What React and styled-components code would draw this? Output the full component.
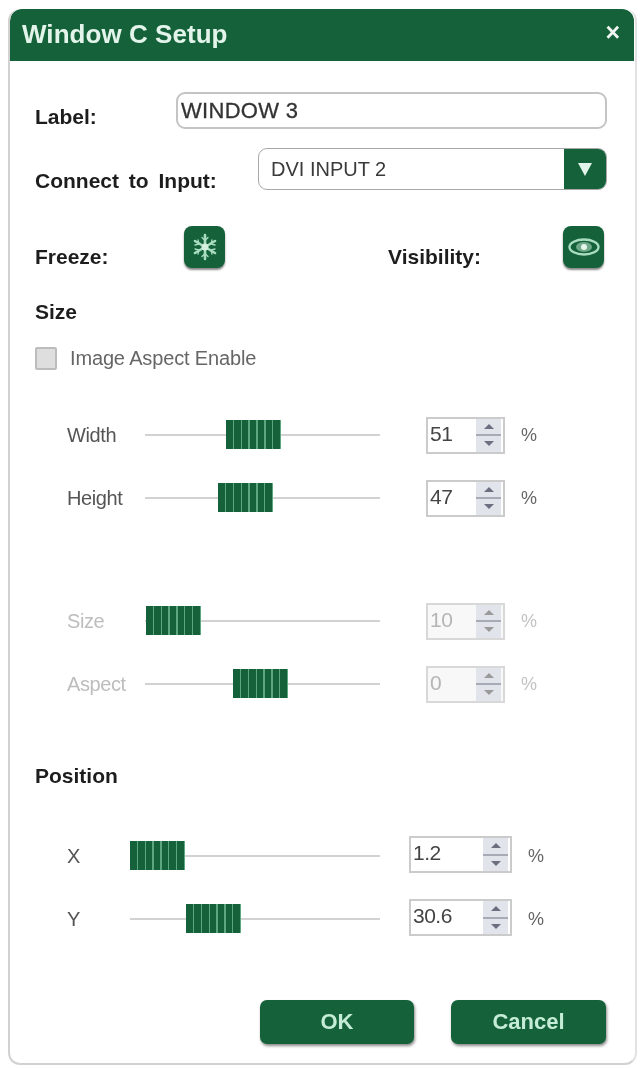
import React from 'react'
import styled, { createGlobalStyle } from 'styled-components'

const green = '#14613a'

const Global = createGlobalStyle`
html, body { margin: 0; padding: 0; background: #fff; }
body { font-family: "Liberation Sans", Arial, sans-serif; }
`

const Snowflake = () => (
  <svg width="30" height="32" viewBox="0 0 30 32" fill="none" stroke="#a9dcc0" strokeWidth="2.6" strokeLinecap="round">
    <path d="M15 4v24M5 10l20 12M5 22l20-12" />
    <path d="M12 6.500l3 3 3-3M12 25.500l3-3 3 3M5 14l4-1-1-4M25 18l-4 1 1 4M5 18l4 1-1 4M25 14l-4-1 1-4" strokeWidth="1.300" />
    <circle cx="15" cy="16" r="3.500" fill="#d6f0e0" stroke="none" />
  </svg>
)

const Eye = () => (
  <svg width="32" height="18" viewBox="0 0 32 18" fill="none">
    <ellipse cx="16" cy="9" rx="14.500" ry="7.500" stroke="#a9dcc0" strokeWidth="2.400" />
    <ellipse cx="16" cy="9" rx="8" ry="5" fill="#6fa98a" />
    <circle cx="16" cy="9" r="3" fill="#e4f5ea" />
  </svg>
)

const Slider = ({ name, value, thumb, disabled, wide }) => (
  <SliderRow $wide={wide}>
    <RowLabel $disabled={disabled} $wide={wide}>{name}</RowLabel>
    <Track>
      <Thumb $left={thumb} />
    </Track>
    <Spinner $disabled={disabled} $wide={wide}>
      <SpinValue $disabled={disabled}>{value}</SpinValue>
      <SpinButtons>
        <SpinButton><Up $disabled={disabled} /></SpinButton>
        <SpinButton><Down $disabled={disabled} /></SpinButton>
      </SpinButtons>
    </Spinner>
    <Percent $disabled={disabled}>%</Percent>
  </SliderRow>
)

const App = () => {
  return (
    <>
      <Global />
      <Window>
        <Header>
          <Title>Window C Setup</Title>
          <Close>×</Close>
        </Header>
        <Body>
          <LabelRow>
            <FieldName>Label:</FieldName>
            <TextBox>WINDOW 3</TextBox>
          </LabelRow>
          <SelectRow>
            <ConnectName>Connect to Input:</ConnectName>
            <Select>
              <SelectText>DVI INPUT 2</SelectText>
              <SelectArrow><Arrow /></SelectArrow>
            </Select>
          </SelectRow>
          <ToggleRow>
            <Toggle $first>
              <FieldName>Freeze:</FieldName>
              <IconButton><Snowflake /></IconButton>
            </Toggle>
            <Toggle>
              <FieldName>Visibility:</FieldName>
              <IconButton><Eye /></IconButton>
            </Toggle>
          </ToggleRow>
          <Heading $top={33}>Size</Heading>
          <CheckRow>
            <Check />
            <CheckText>Image Aspect Enable</CheckText>
          </CheckRow>
          <SliderGroup $top={46}>
            <Slider name="Width" value="51" thumb={81} />
            <Slider name="Height" value="47" thumb={73} />
          </SliderGroup>
          <SliderGroup $top={85}>
            <Slider name="Size" value="10" thumb={1} disabled />
            <Slider name="Aspect" value="0" thumb={88} disabled />
          </SliderGroup>
          <Heading $top={62}>Position</Heading>
          <SliderGroup $top={49}>
            <Slider name="X" value="1.2" thumb={0} wide />
            <Slider name="Y" value="30.6" thumb={56} wide />
          </SliderGroup>
          <Footer>
            <ActionButton $width={154}>OK</ActionButton>
            <ActionButton $width={155}>Cancel</ActionButton>
          </Footer>
        </Body>
      </Window>
    </>
  )
}

export default App

const Window = styled.div`
box-sizing:border-box;
width:629px;
height:1056px;
margin:9px 0 0 8px;
background:#fff;
border:2px solid #d2d2d2;
border-top:none;
border-right-color:#e2e2e2;
border-radius:12px;
overflow:hidden;
filter:blur(0.5px);
`
const Header = styled.div`
height:52px;
background:${green};
display:flex;
align-items:center;
justify-content:space-between;
padding:0 14px 0 12px;
margin-right:1px;
border-radius:12px 12px 0 0;
`
const Title = styled.div`
color:#e3f5ea;
font-size:26px;
font-weight:bold;
letter-spacing:0.05px;
margin-bottom:2px;
`
const Close = styled.div`
color:#f0f5f2;
font-size:25px;
font-weight:bold;
line-height:20px;
margin-bottom:7px;
`
const Body = styled.div`
padding:0 0 0 25px;
display:flex;
flex-direction:column;
`
const FieldName = styled.div`
color:#1d1d1d;
font-size:21px;
font-weight:bold;
white-space:nowrap;
`
const ConnectName = styled(FieldName)`
word-spacing:4px;
margin-bottom:-3px;
`
const LabelRow = styled.div`
margin-top:31px;
display:flex;
align-items:flex-end;
justify-content:space-between;
height:37px;
padding-right:28px;
`
const TextBox = styled.div`
box-sizing:border-box;
width:431px;
height:37px;
border:2px solid #c4c4c4;
border-radius:9px;
padding-left:3px;
font-size:22px;
color:#333;
display:flex;
align-items:center;
letter-spacing:0.3px;
-webkit-text-stroke:0.3px #333;
`
const SelectRow = styled.div`
margin-top:19px;
display:flex;
align-items:flex-end;
justify-content:space-between;
height:42px;
padding-right:28px;
`
const Select = styled.div`
box-sizing:border-box;
width:349px;
height:42px;
border:1px solid #a8a8a8;
border-radius:9px;
display:flex;
align-items:center;
justify-content:space-between;
overflow:hidden;
`
const SelectText = styled.div`
font-size:20px;
color:#3a3a3a;
padding-left:12px;
`
const SelectArrow = styled.div`
width:42px;
height:42px;
background:${green};
display:flex;
align-items:center;
justify-content:center;
`
const Arrow = styled.div`
width:0;
height:0;
border-left:7px solid transparent;
border-right:7px solid transparent;
border-top:13px solid #e3f5ea;
`
const ToggleRow = styled.div`
margin-top:36px;
display:flex;
height:42px;
`
const Toggle = styled.div`
display:flex;
align-items:flex-start;
justify-content:space-between;
width:${p => p.$first ? 190 : 216}px;
margin-right:${p => p.$first ? 163 : 0}px;
${FieldName}{
  margin-top:19px;
}
`
const IconButton = styled.div`
width:41px;
height:42px;
background:${green};
border-radius:8px;
box-shadow:0 2px 2px #8a8a8a;
display:flex;
align-items:center;
justify-content:center;
`
const Heading = styled(FieldName)`
margin-top:${p => p.$top}px;
height:22px;
line-height:22px;
`
const CheckRow = styled.div`
margin-top:24px;
height:23px;
display:flex;
align-items:center;
gap:13px;
`
const Check = styled.div`
box-sizing:border-box;
width:22px;
height:23px;
border:2px solid #bcbcbc;
background:#dedede;
border-radius:2px;
`
const CheckText = styled.div`
font-size:20px;
color:#666;
letter-spacing:-0.15px;
`
const SliderGroup = styled.div`
margin-top:${p => p.$top}px;
display:flex;
flex-direction:column;
gap:25px;
`
const SliderRow = styled.div`
height:38px;
display:grid;
grid-template-columns:${p => p.$wide ? '95px 250px 29px 103px 1fr' : '110px 235px 46px 79px 1fr'};
grid-template-areas:"name track . box pct";
align-items:center;
`
const RowLabel = styled.div`
grid-area:name;
font-size:20px;
color:${p => p.$disabled ? '#bdbdbd' : '#555'};
padding-left:32px;
letter-spacing:-0.4px;
`
const Track = styled.div`
grid-area:track;
position:relative;
height:2px;
background:#d2d2d2;
`
const Thumb = styled.div`
position:absolute;
left:${p => p.$left}px;
top:-14px;
width:55px;
height:29px;
background:repeating-linear-gradient(90deg,${green} 0 6.7px,#5da67f 6.7px 7.9px);
`
const Spinner = styled.div`
grid-area:box;
box-sizing:border-box;
height:37px;
margin-bottom:${p => p.$wide ? 3 : 0}px;
border:2px solid ${p => p.$disabled ? '#d8d8d8' : '#cbcbcb'};
background:${p => p.$disabled ? '#f8f8f8' : '#fff'};
display:flex;
align-items:center;
justify-content:space-between;
`
const SpinValue = styled.div`
font-size:21px;
color:${p => p.$disabled ? '#b5b5b5' : '#444'};
padding:0 0 3px 2px;
letter-spacing:-0.5px;
`
const SpinButtons = styled.div`
width:25px;
height:33px;
margin-right:2px;
display:flex;
flex-direction:column;
gap:2px;
background:#a8aab6;
`
const SpinButton = styled.div`
flex:1;
background:#e2e4ec;
display:flex;
align-items:center;
justify-content:center;
`
const Up = styled.div`
width:0;
height:0;
border-left:5px solid transparent;
border-right:5px solid transparent;
border-bottom:5px solid ${p => p.$disabled ? '#9a9a9a' : '#6c6f80'};
`
const Down = styled.div`
width:0;
height:0;
border-left:5px solid transparent;
border-right:5px solid transparent;
border-top:5px solid ${p => p.$disabled ? '#9a9a9a' : '#6c6f80'};
`
const Percent = styled.div`
grid-area:pct;
font-size:18px;
color:${p => p.$disabled ? '#c2c2c2' : '#666'};
padding-left:16px;
`
const Footer = styled.div`
margin-top:63px;
display:flex;
gap:37px;
justify-content:flex-end;
padding-right:29px;
`
const ActionButton = styled.div`
width:${p => p.$width}px;
height:44px;
background:${green};
border-radius:7px;
box-shadow:1px 2px 3px #8a8a8a;
color:#c5ecd6;
font-size:22px;
font-weight:bold;
display:flex;
align-items:center;
justify-content:center;
`
